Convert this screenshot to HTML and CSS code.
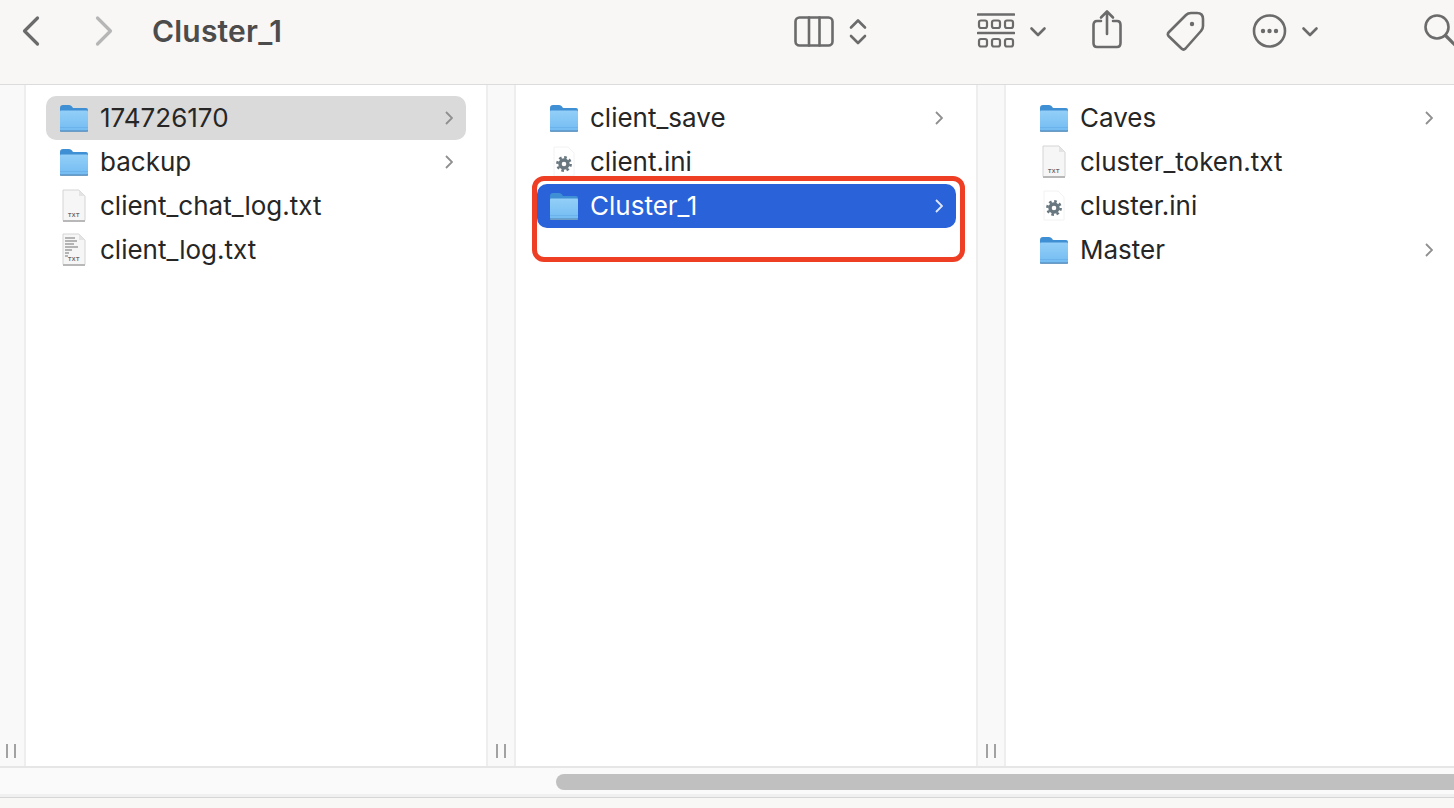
FILE: index.html
```html
<!DOCTYPE html>
<html lang="en">
<head>
<meta charset="utf-8">
<title>Cluster_1</title>
<link rel="stylesheet" href="styles.css">
</head>
<body>
<svg class="defs" width="0" height="0" aria-hidden="true">
  <defs>
    <linearGradient id="fg" x1="0" y1="0" x2="0" y2="1">
      <stop offset="0" stop-color="#93cff8"/>
      <stop offset="1" stop-color="#74bcf2"/>
    </linearGradient>
    <symbol id="folder" viewBox="0 0 30 30">
      <path d="M1 28 V5 Q1 2 4 2 H10 Q12 2 13 3.5 L14 5 H27 Q29 5 29 7 V28 Z" fill="#3f8fd4"/>
      <rect x="1" y="7.5" width="28" height="20" rx="1" fill="url(#fg)"/>
      <path d="M1 24.5 H29" stroke="#68afe8" stroke-width=".8"/>
      <rect x="1" y="27.5" width="28" height="1.5" rx=".7" fill="#6d9cc4"/>
    </symbol>
    <symbol id="txt" viewBox="0 0 30 36">
      <path d="M4 2 H20 L26 8 V32 Q26 33 25 33 H5 Q4 33 4 32 Z" fill="#f6f6f6" stroke="#d4d4d4" stroke-width="1"/>
      <path d="M20 2 V8 H26 Z" fill="#e4e4e4"/>
      <rect x="4" y="32" width="22" height="2" fill="#b8b8b8"/>
      <text x="15" y="29" class="txt-label">TXT</text>
    </symbol>
    <symbol id="log" viewBox="0 0 30 36">
      <path d="M4 2 H20 L26 8 V32 Q26 33 25 33 H5 Q4 33 4 32 Z" fill="#f6f6f6" stroke="#d4d4d4" stroke-width="1"/>
      <path d="M20 2 V8 H26 Z" fill="#e4e4e4"/>
      <path d="M6 6 H16 M6 9 H18 M6 12 H15 M6 15 H19 M6 18 H13 M6 21 H10 M6 24 H9" stroke="#b4b4b4" stroke-width="2"/>
      <rect x="4" y="32" width="22" height="2" fill="#b8b8b8"/>
      <text x="15" y="29" class="txt-label">TXT</text>
    </symbol>
    <symbol id="ini" viewBox="0 0 30 36">
      <path d="M5 3 H19 L25 9 V32 H5 Z" fill="#fff" stroke="#f2f2f2" stroke-width="1"/>
      <circle cx="15" cy="20" r="4" fill="none" stroke="#68777f" stroke-width="3.4"/>
      <circle cx="15" cy="20" r="6.6" fill="none" stroke="#68777f" stroke-width="2.6" stroke-dasharray="2.6 2.58"/>
    </symbol>
    <symbol id="more-chev" viewBox="0 0 8 14">
      <path d="M1 1 L7 7 L1 13" fill="none" stroke="currentColor" stroke-width="1.8"/>
    </symbol>
  </defs>
</svg>
<div class="window">
  <header class="toolbar">
    <svg class="ti w18" viewBox="0 0 18 44"><path d="M15.5 9 L2.5 22 L15.5 35" class="s3"/></svg>
    <svg class="ti w18 fwd" viewBox="0 0 18 44"><path d="M2.5 9 L15.5 22 L2.5 35" class="s3"/></svg>
    <h1 class="title">Cluster_1</h1>
    <div class="tools">
      <svg class="ti w40" viewBox="0 0 40 44"><rect x="1.5" y="8.5" width="37" height="28" rx="4" class="s"/><path d="M15 8.5 V36.5 M25.5 8.5 V36.5" class="s"/></svg>
      <svg class="ti w18 ml15" viewBox="0 0 18 44"><path d="M2 18.5 L9 11.5 L16 18.5 M2 27 L9 34 L16 27" class="s"/></svg>
      <svg class="ti w38 ml110" viewBox="0 0 38 44"><path d="M1 5.5 H37 M1 24 H37" class="s"/><rect x="2" y="11.5" width="8" height="7.5" rx="2" class="t"/><rect x="15" y="11.5" width="8" height="7.5" rx="2" class="t"/><rect x="28" y="11.5" width="8" height="7.5" rx="2" class="t"/><rect x="2" y="30" width="8" height="7.5" rx="2" class="t"/><rect x="15" y="30" width="8" height="7.5" rx="2" class="t"/><rect x="28" y="30" width="8" height="7.5" rx="2" class="t"/></svg>
      <svg class="ti w18 ml14" viewBox="0 0 18 44"><path d="M2.5 19.5 L9 26 L15.5 19.5" class="s"/></svg>
      <svg class="ti w31 ml44" viewBox="0 0 31 44"><path d="M10 12 H6 Q2.5 12 2.5 16 V34 Q2.5 38 6 38 H26 Q29.5 38 29.5 34 V16 Q29.5 12 26 12 H22 M16 25 V3 M10 8.5 L16 2.5 L22 8.5" class="s"/></svg>
      <svg class="ti w39 ml44" viewBox="0 0 39 44"><path d="M20 6 Q22 4 25 4 H31 Q37 4 37 10 V17 Q37 20 35 22 L19.5 39.5 Q17.5 41.5 15.5 39.5 L2.5 27 Q1 25 3 23 Z" class="s"/><circle cx="26" cy="15" r="2.2" class="f"/></svg>
      <svg class="ti w35 ml47" viewBox="0 0 35 44"><circle cx="17.5" cy="22" r="15.5" class="s"/><circle cx="11" cy="22" r="2.2" class="f"/><circle cx="17.5" cy="22" r="2.2" class="f"/><circle cx="24" cy="22" r="2.2" class="f"/></svg>
      <svg class="ti w18 ml14" viewBox="0 0 18 44"><path d="M2.5 19.5 L9 26 L15.5 19.5" class="s"/></svg>
      <svg class="ti w30 ml105" viewBox="0 0 30 44"><circle cx="13" cy="18" r="11.5" class="s"/><path d="M21.5 26.5 L32 37" class="s3"/></svg>
    </div>
  </header>

  <main class="browser">
    <div class="gutter lead"><span class="grip"></span></div>

    <section class="column">
      <div class="row active"><svg class="folder"><use href="#folder"/></svg><span class="name">174726170</span><svg class="chev"><use href="#more-chev"/></svg></div>
      <div class="row"><svg class="folder"><use href="#folder"/></svg><span class="name">backup</span><svg class="chev"><use href="#more-chev"/></svg></div>
      <div class="row"><svg class="doc"><use href="#txt"/></svg><span class="name">client_chat_log.txt</span></div>
      <div class="row"><svg class="doc"><use href="#log"/></svg><span class="name">client_log.txt</span></div>
    </section>
    <div class="gutter"><span class="grip"></span></div>

    <section class="column">
      <div class="row"><svg class="folder"><use href="#folder"/></svg><span class="name">client_save</span><svg class="chev"><use href="#more-chev"/></svg></div>
      <div class="row"><svg class="doc"><use href="#ini"/></svg><span class="name">client.ini</span></div>
      <div class="row selected"><svg class="folder"><use href="#folder"/></svg><span class="name">Cluster_1</span><svg class="chev"><use href="#more-chev"/></svg></div>
      <div class="callout"></div>
    </section>
    <div class="gutter"><span class="grip"></span></div>

    <section class="column last">
      <div class="row"><svg class="folder"><use href="#folder"/></svg><span class="name">Caves</span><svg class="chev"><use href="#more-chev"/></svg></div>
      <div class="row"><svg class="doc"><use href="#txt"/></svg><span class="name">cluster_token.txt</span></div>
      <div class="row"><svg class="doc"><use href="#ini"/></svg><span class="name">cluster.ini</span></div>
      <div class="row"><svg class="folder"><use href="#folder"/></svg><span class="name">Master</span><svg class="chev"><use href="#more-chev"/></svg></div>
    </section>
  </main>

  <div class="hscroll"><div class="thumb"></div></div>
  <footer class="statusbar"></footer>
</div>
</body>
</html>
```
FILE: styles.css
```css
* { box-sizing: border-box; }
html, body { margin: 0; padding: 0; height: 100%; overflow: hidden; background: #fff; }
body { font-family: Inter, "Liberation Sans", sans-serif; color: #262626; }
.defs { position: absolute; }
.txt-label { font: 700 5.6px "Liberation Sans", sans-serif; letter-spacing: .5px; fill: #666; text-anchor: middle; }

.window { display: flex; flex-direction: column; height: 808px; width: 1454px; overflow: hidden; }

.toolbar {
  display: flex; align-items: flex-start; flex: none;
  height: 85px; padding: 9px 0 0 22px;
  background: #f8f7f5; border-bottom: 1px solid #dcdcdc;
}
.title { flex: 1; margin: 0 0 0 39px; font-size: 30px; line-height: 44px; font-weight: 600; color: #4c4c4c; letter-spacing: .2px; }
.tools { display: flex; flex: none; width: 660px; overflow: hidden; }
.ti { display: block; height: 44px; flex: none; overflow: hidden; }
.ti .s, .ti .t, .ti .s3 { fill: none; stroke: #6b6b6b; stroke-linecap: round; stroke-linejoin: round; }
.ti .s { stroke-width: 2.6; }
.ti .t { stroke-width: 2.2; }
.ti .s3 { stroke-width: 3.2; }
.ti .f { fill: #6b6b6b; }
.fwd { margin-left: 55px; }
.fwd .s3 { stroke: #b6b6b6; }
.w18 { width: 18px; } .w30 { width: 30px; } .w31 { width: 31px; } .w35 { width: 35px; }
.w38 { width: 38px; } .w39 { width: 39px; } .w40 { width: 40px; }
.ml14 { margin-left: 14px; } .ml15 { margin-left: 15px; } .ml44 { margin-left: 44px; }
.ml47 { margin-left: 47px; } .ml105 { margin-left: 105px; } .ml110 { margin-left: 110px; }

.browser { display: flex; flex: none; height: 681px; }
.gutter {
  flex: none; width: 30px; position: relative;
  background: #f9f9f9; border-left: 2px solid #eeeeee; border-right: 2px solid #eeeeee;
  display: flex; justify-content: center; align-items: flex-end; padding-bottom: 8px;
}
.gutter.lead { width: 26px; border-left: 0; padding-right: 2px; }
.grip { display: block; width: 10px; height: 14px; border-left: 2px solid #a2a2a2; border-right: 2px solid #a2a2a2; }
.column { flex: none; width: 460px; padding: 11px 0 0 20px; position: relative; background: #fff; }
.column.last { width: 448px; }

.row {
  display: flex; align-items: center; width: 420px; height: 44px;
  padding: 0 13px; border-radius: 10px; font-size: 26px; color: #262626;
}
.row.active { background: #dadada; }
.row.selected { background: #2a62d9; color: #fff; width: 419px; margin-left: 1px; padding-left: 12px; }
.folder { width: 30px; height: 30px; flex: none; }
.doc { width: 30px; height: 36px; flex: none; }
.name { margin-left: 11px; padding-bottom: 2px; white-space: nowrap; }
.chev { width: 8px; height: 14px; margin-left: auto; flex: none; color: #8f8f8f; }
.row.selected .chev { color: #dfe8fb; }

.callout {
  position: absolute; left: 16px; top: 91px; width: 433px; height: 86px;
  border: 5px solid #ee3f25; border-radius: 12px;
}

.hscroll {
  flex: none; height: 32px; padding: 6px 0 0 556px;
  background: #fafafa; border-top: 2px solid #e6e6e6; border-bottom: 1px solid #d6d6d6;
  box-shadow: inset 0 -3px 0 #f0f0f0;
}
.thumb { height: 16px; background: #c0c0c0; border-radius: 8px 0 0 8px; }
.statusbar { flex: none; height: 10px; background: #f8f7f5; }
```
